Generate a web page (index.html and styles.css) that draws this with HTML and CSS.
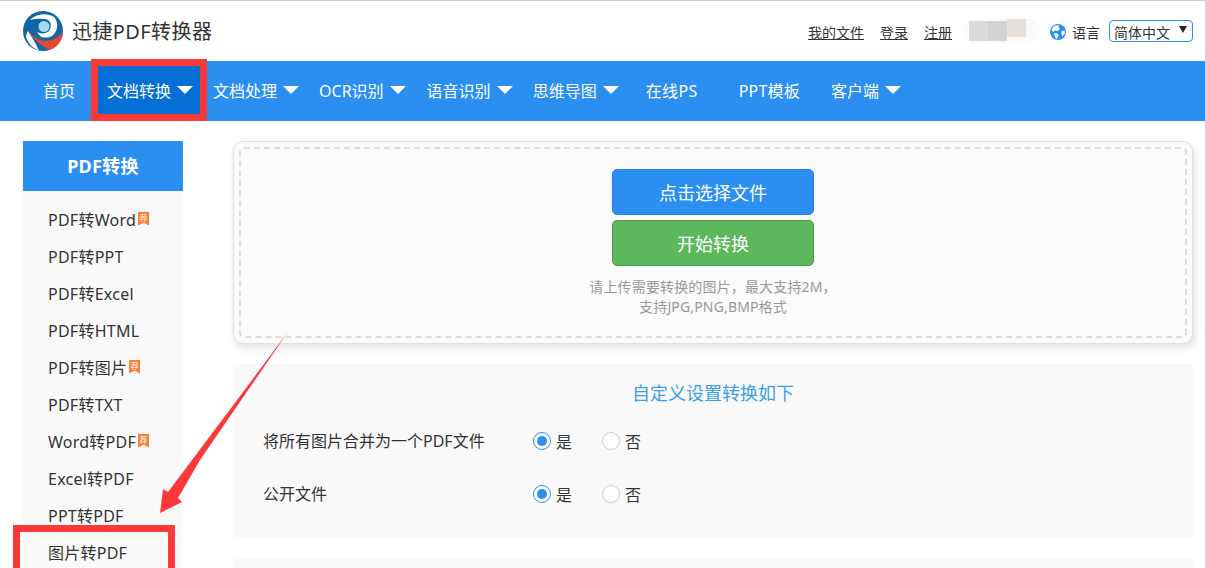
FILE: index.html
```html
<!DOCTYPE html>
<html lang="zh-CN">
<head>
    <meta charset="UTF-8">
    <title>迅捷PDF转换器</title>
    <link rel="stylesheet" href="styles.css">
</head>
<body>
    <header class="top">
        <a class="brand">
            <svg class="brand-logo" viewBox="0 0 40 40" width="40" height="40">
                <circle cx="20" cy="20" r="20" fill="#0e68a6"/>
                <path d="M7 9C12 3 24 1 31 6C36 11 35 21 29 25C25 27 20 27 17 25L14 21C18 23 23 23 26 20C29 16 28 11 25 9C20 7 12 8 7 9Z" fill="#fff"/>
                <circle cx="21" cy="15.5" r="5.5" fill="#a8d8f0"/>
                <path d="M1 13C4 20 12 28 20 29.5C27 30.5 34 28 40 21C40 30 33 37 26 39C17 34 6 24 1 13Z" fill="#e8472f"/>
                <path d="M3 26C3.500 23 4 21 5 20C9 26 13 33 16 39.500C10 38 5 32 3 26Z" fill="#f4f8fb"/>
            </svg>
            <span class="brand-name">迅捷PDF转换器</span>
        </a>
        <div class="top-right">
            <a class="top-link">我的文件</a>
            <a class="top-link">登录</a>
            <a class="top-link">注册</a>
            <div class="user-blur">
                <span class="blur-a"></span><span class="blur-b"></span><span class="blur-c"></span>
            </div>
            <svg class="globe" viewBox="0 0 16 16" width="16" height="16">
                <circle cx="8" cy="8" r="8" fill="#2a8ff0"/>
                <path d="M5 1.500L9 1.200L8.500 3.500L10 5L7.500 7L5 6.500L3 8L1.500 6C2 4 3.500 2.500 5 1.500Z" fill="#fff"/>
                <path d="M4 9L7.500 9.500L8.500 11.500L7 15L5 13.500Z" fill="#fff"/>
                <path d="M11.500 7L14.500 6.500L14.800 9.500L12.500 12.500L11.500 10Z" fill="#fff"/>
            </svg>
            <span class="lang-label">语言</span>
            <div class="lang-select">简体中文<i class="lang-caret"></i></div>
        </div>
    </header>

    <nav class="nav">
        <a class="nav-item plain first">首页</a>
        <a class="nav-item active">文档转换<i class="caret"></i></a>
        <a class="nav-item">文档处理<i class="caret"></i></a>
        <a class="nav-item nav-ocr">OCR识别<i class="caret"></i></a>
        <a class="nav-item">语音识别<i class="caret"></i></a>
        <a class="nav-item">思维导图<i class="caret"></i></a>
        <a class="nav-item plain nav-ps">在线PS</a>
        <a class="nav-item plain nav-ppt">PPT模板</a>
        <a class="nav-item">客户端<i class="caret"></i></a>
    </nav>

    <div class="content">
        <aside class="side">
            <h2 class="side-title">PDF转换</h2>
            <ul class="side-list">
                <li>PDF转Word<i class="tag">荐</i></li>
                <li>PDF转PPT</li>
                <li>PDF转Excel</li>
                <li>PDF转HTML</li>
                <li>PDF转图片<i class="tag">荐</i></li>
                <li>PDF转TXT</li>
                <li>Word转PDF<i class="tag">荐</i></li>
                <li>Excel转PDF</li>
                <li>PPT转PDF</li>
                <li>图片转PDF</li>
            </ul>
        </aside>

        <main class="main">
            <section class="upload">
                <div class="upload-inner">
                    <button class="btn btn-blue">点击选择文件</button>
                    <button class="btn btn-green">开始转换</button>
                    <p class="hint">请上传需要转换的图片，最大支持2M，<br>支持JPG,PNG,BMP格式</p>
                </div>
            </section>

            <section class="settings">
                <h3 class="settings-title">自定义设置转换如下</h3>
                <div class="row">
                    <span class="row-label">将所有图片合并为一个PDF文件</span>
                    <span class="radio on"></span><span class="radio-text">是</span>
                    <span class="radio"></span><span class="radio-text">否</span>
                </div>
                <div class="row">
                    <span class="row-label">公开文件</span>
                    <span class="radio on"></span><span class="radio-text">是</span>
                    <span class="radio"></span><span class="radio-text">否</span>
                </div>
            </section>

            <section class="more"></section>
        </main>
    </div>

    <!-- red annotations drawn over the page -->
    <div class="mark mark-nav"></div>
    <div class="mark mark-side"></div>
    <svg class="arrow" viewBox="0 0 1205 568" width="1205" height="568">
        <polygon points="288,332 200,460 178,498 182,502 160,513 163,489 168,492" fill="#fb3939"/>
    </svg>
</body>
</html>
```

FILE: styles.css
```css
/* Global styles */
html, body {
    height: 568px;
    overflow: hidden;
}
body {
    margin: 0;
    position: relative;
    font-family: "Noto Sans", "Noto Sans CJK SC", sans-serif;
    color: #333;
    background: #fff;
}

/* Top bar */
.top {
    display: flex;
    justify-content: space-between;
    align-items: center;
    height: 60px;
    padding: 0 12px 0 23px;
    border-top: 1px solid #ccc;
}
.brand {
    display: flex;
    align-items: center;
    gap: 9px;
}
.brand-name {
    padding-bottom: 2px;
    font-size: 20px;
    letter-spacing: 0.4px;
    color: #333;
}
.top-right {
    display: flex;
    align-items: center;
    font-size: 14px;
}
.top-link {
    margin-right: 16px;
    padding-top: 2px;
    text-decoration: underline;
    color: #333;
}
.user-blur {
    display: flex;
    align-items: flex-start;
    width: 77px;
    height: 24px;
    margin: 0 10px 0 -5px;
    padding-left: 6px;
    box-sizing: border-box;
    background: #fcfaf8;
    border-radius: 12px;
    filter: blur(0.7px);
}
.user-blur span {
    display: block;
    width: 19px;
}
.blur-a {
    height: 20px;
    margin-top: 2px;
    background: #dcdbda;
}
.blur-b {
    height: 20px;
    margin-top: 2px;
    background: #d4d3d2;
}
.blur-c {
    height: 18px;
    background: #e6dfda;
}
.globe {
    margin: 2px 6px 0 0;
}
.lang-label {
    margin-right: 9px;
    padding-top: 2px;
}
.lang-select {
    display: flex;
    align-items: center;
    justify-content: space-between;
    width: 84px;
    height: 22px;
    padding: 2px 5px 0 4px;
    box-sizing: border-box;
    font-size: 14px;
    background: #fff;
    border: 1px solid #2a8ff0;
    border-radius: 4px;
}
.lang-caret {
    width: 0;
    height: 0;
    margin-bottom: 5px;
    border-left: 4px solid transparent;
    border-right: 4px solid transparent;
    border-top: 7px solid #222;
}

/* Nav */
.nav {
    display: flex;
    align-items: stretch;
    height: 60px;
    padding-left: 23px;
    background: #2a8ff0;
}
.nav-item {
    display: flex;
    align-items: center;
    gap: 6px;
    padding: 0 10px 2px;
    font-size: 16px;
    color: #fff;
    white-space: nowrap;
}
.nav-item.plain {
    padding: 0 21px 2px 20px;
}
.nav-item.first {
    padding-right: 22px;
}
.nav-item.active {
    background: #056fd6;
}
.nav-item.nav-ocr {
    padding-right: 11px;
}
.nav-item.nav-ps {
    padding-left: 17px;
    letter-spacing: 0.4px;
}
.nav-item.nav-ppt {
    letter-spacing: 0.2px;
}
.caret {
    width: 0;
    height: 0;
    border-left: 8px solid transparent;
    border-right: 8px solid transparent;
    border-top: 8px solid #fff;
}

/* Page body */
.content {
    display: flex;
    gap: 50px;
    height: 447px;
    padding: 20px 12px 0 23px;
    box-sizing: border-box;
    overflow: hidden;
}

/* Sidebar */
.side {
    flex: 0 0 160px;
}
.side-title {
    margin: 0;
    height: 50px;
    line-height: 50px;
    text-align: center;
    font-size: 18px;
    font-weight: 700;
    letter-spacing: 0.3px;
    color: #fff;
    background: #2a8ff0;
}
.side-list {
    margin: 0;
    padding: 9px 0 0 25px;
    list-style: none;
    background: #f9f9f9;
}
.side-list li {
    display: flex;
    align-items: center;
    height: 37px;
    font-size: 16px;
    letter-spacing: 0.25px;
    color: #333;
}
.tag {
    display: block;
    width: 11px;
    height: 14px;
    margin-left: 2px;
    font-size: 8px;
    font-style: normal;
    line-height: 12px;
    letter-spacing: 0;
    text-align: center;
    color: #fff;
    background: #fb7d32;
    clip-path: polygon(0 0, 100% 0, 100% 100%, 50% 80%, 0 100%);
}

/* Main column */
.main {
    flex: 1;
    min-width: 0;
}
.upload {
    padding: 5px;
    background: #fbfbfb;
    border: 1px solid #e0e0e0;
    border-radius: 10px;
    box-shadow: 2px 4px 8px rgba(0, 0, 0, 0.12);
}
.upload-inner {
    display: flex;
    flex-direction: column;
    align-items: center;
    height: 167px;
    padding-top: 20px;
    border: 2px dashed #ddd;
    border-radius: 5px;
}
.btn {
    display: block;
    flex: none;
    width: 202px;
    height: 46px;
    padding: 0;
    font-family: inherit;
    font-size: 18px;
    color: #fff;
    border-radius: 5px;
    border: 1px solid;
}
.btn-blue {
    background: #2a8ff0;
    border-color: #2a80d8;
    margin-bottom: 5px;
}
.btn-green {
    background: #5cb85c;
    border-color: #4a9a4a;
}
.hint {
    margin: 11px 0 0;
    font-size: 14px;
    line-height: 20px;
    letter-spacing: 0.15px;
    text-align: center;
    color: #999;
}

.settings {
    height: 175px;
    margin-top: 20px;
    padding: 0 30px;
    box-sizing: border-box;
    background: #f9f9f9;
}
.settings-title {
    margin: 0;
    padding-top: 15px;
    height: 50px;
    box-sizing: border-box;
    text-align: center;
    font-size: 18px;
    font-weight: 400;
    color: #3a9fe8;
}
.row {
    display: flex;
    align-items: center;
    height: 53px;
    font-size: 16px;
}
.row-label {
    flex: 0 0 270px;
    padding-bottom: 2px;
    box-sizing: border-box;
}
.radio {
    position: relative;
    width: 18px;
    height: 18px;
    box-sizing: border-box;
    background: #fff;
    border: 1px solid #ccc;
    border-radius: 50%;
}
.radio.on {
    border-color: #2a8ff0;
}
.radio.on::after {
    content: "";
    position: absolute;
    top: 3px;
    left: 3px;
    width: 10px;
    height: 10px;
    background: #2a8ff0;
    border-radius: 50%;
}
.radio-text {
    margin-left: 5px;
    width: 46px;
}
.more {
    height: 40px;
    margin-top: 20px;
    background: #f9f9f9;
}

/* Annotations */
.mark {
    position: absolute;
    box-sizing: border-box;
    border: 7px solid #fb3939;
}
.mark-nav {
    left: 91px;
    top: 59px;
    width: 116px;
    height: 62px;
}
.mark-side {
    left: 13px;
    top: 525px;
    width: 162px;
    height: 43px;
    border-bottom: 0;
}
.arrow {
    position: absolute;
    left: 0;
    top: 0;
    pointer-events: none;
}
```
